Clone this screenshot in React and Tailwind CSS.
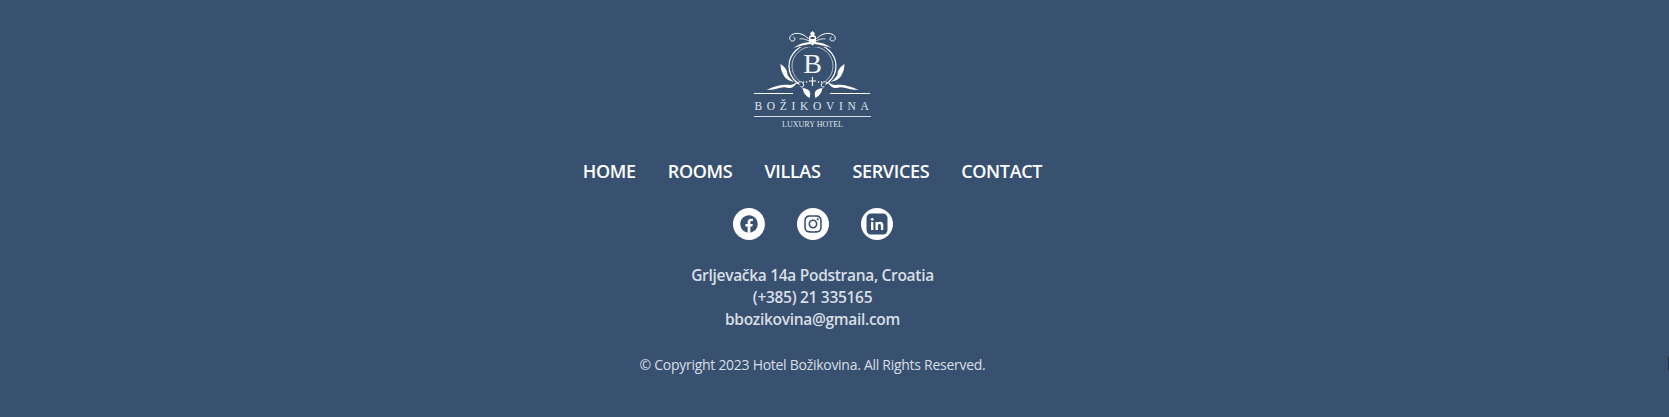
import { FaFacebook, FaInstagram } from "react-icons/fa";

// one half of the crest, the other half is the same thing mirrored
const CrestHalf = () => (
  <g>
    {/* crown scrolls */}
    <path d="M55 9C50 3 42 2 38 5c-3 2-2 6 1 6s3-3 1-4" stroke="#fff" strokeWidth="1" fill="none" />
    <path d="M56 11c-3-1-7-3-10-2" stroke="#fff" strokeWidth="0.8" fill="none" />
    <path d="M40 18c5-4 11-6 17-6l0 2c-6 1-12 2-17 4z" fill="#fff" />
    {/* side leaf */}
    <path d="M27 34c5 3 7 7 7 11 2 3 4 5 7 7-5-1-9-3-11-7-2-3-3-7-3-11z" fill="#fff" />
    {/* lower sprig */}
    <path d="M13 60c8-4 16-6 23-5 3 0 5-1 7-3-1 4-4 6-8 6-3-1-6-1-9 0-4 1-8 2-13 2z" fill="#fff" />
    {/* bottom scrolls */}
    <path d="M43 54c2-3 6-3 7 0s-2 4-3 2" stroke="#fff" strokeWidth="1" fill="none" />
    <path d="M49 58c2 0 5 1 7 3 1 2 1 5 0 7-3-2-6-4-7-10z" fill="#fff" />
    <circle cx="53" cy="52" r="0.8" fill="#fff" />
    <circle cx="50" cy="52" r="0.7" fill="#fff" />
  </g>
);

const Logo = () => (
  <svg width="120" height="102" viewBox="0 0 120 102" fill="none" className="block">
    <g transform="translate(0.500,0)">
      <ellipse cx="59" cy="36" rx="23.500" ry="22" stroke="#fff" strokeWidth="1.200" />
      <ellipse cx="59" cy="36" rx="20.500" ry="19.500" stroke="#fff" strokeWidth="0.600" />
      <rect x="44" y="4" width="30" height="13" fill="#385170" />
      <rect x="46" y="50" width="26" height="12" fill="#385170" />
      <CrestHalf />
      <g transform="translate(118,0) scale(-1,1)">
        <CrestHalf />
      </g>
      {/* crown and cross in the middle */}
      <path d="M59 1l2.500 2.500-1 1.500 2 1.500v6l-3.500 3-3.500-3v-6l2-1.500-1-1.500z" fill="#fff" />
      <rect x="57" y="7" width="4" height="2" fill="#385170" />
      <path d="M58.400 47h1.200v3.400h3v1.200h-3v4.400h-1.200v-4.400h-3v-1.200h3z" fill="#fff" />
    </g>
    <rect x="1" y="63" width="39" height="1" fill="#fff" />
    <rect x="77" y="63" width="40" height="1" fill="#fff" />
    <rect x="1" y="86" width="117" height="1" fill="#d7dde5" />
    <text x="59.500" y="43" textAnchor="middle" fill="#f1f3f6" fontFamily="'Liberation Serif', serif" fontSize="28">B</text>
    <text x="61" y="80" textAnchor="middle" fill="#dfe4ea" fontFamily="'Liberation Serif', serif" fontSize="11.500" letterSpacing="4.700">BOŽIKOVINA</text>
    <text x="59.500" y="97" textAnchor="middle" fill="#dfe4ea" fontFamily="'Liberation Serif', serif" fontSize="8">LUXURY HOTEL</text>
  </svg>
);

const LinkedinIcon = () => (
  <svg width="22" height="22" viewBox="0 0 22 22">
    <rect x="0.500" y="0.500" width="21" height="21" rx="4.500" fill="#385170" />
    <rect x="5" y="9" width="2.400" height="8" fill="#fff" />
    <circle cx="6.200" cy="6.300" r="1.400" fill="#fff" />
    <path d="M9.500 9h2.300v1.100c.5-.8 1.400-1.300 2.500-1.300 2 0 3 1.200 3 3.400V17h-2.400v-4.300c0-1.100-.4-1.800-1.400-1.800s-1.600.7-1.600 1.800V17H9.500z" fill="#fff" />
  </svg>
);

const navLinks = ["HOME", "ROOMS", "VILLAS", "SERVICES", "CONTACT"];

export default function App() {
  return (
    <footer className="relative h-[417px] bg-[#385170] pt-[30px] pr-[44px] flex flex-col items-center font-['Open_Sans',sans-serif]">
      <Logo />
      <nav className="flex gap-[32px] mt-[25px] text-white text-[18px] leading-[28px] font-semibold tracking-[-0.34px]">
        {navLinks.map((link) => (
          <a key={link} href="#">{link}</a>
        ))}
      </nav>
      <div className="flex gap-[32px] mt-[23px]">
        <a href="#" className="w-[32px] h-[32px] rounded-full bg-white flex items-center justify-center text-[#385170]">
          <FaFacebook size={18} />
        </a>
        <a href="#" className="w-[32px] h-[32px] rounded-full bg-white flex items-center justify-center text-[#385170]">
          <FaInstagram size={20} />
        </a>
        <a href="#" className="w-[32px] h-[32px] rounded-full bg-white flex items-center justify-center">
          <LinkedinIcon />
        </a>
      </div>
      <div className="mt-[24px] text-center text-[#d9dee5] text-[15.5px] leading-[22px] font-semibold tracking-[-0.3px]">
        <p>Grljevačka 14a Podstrana, Croatia</p>
        <p>(+385) 21 335165</p>
        <p>bbozikovina@gmail.com</p>
      </div>
      <p className="mt-[25px] text-[#d9dee5] text-[14px] leading-[20px] tracking-[-0.28px]">© Copyright 2023 Hotel Božikovina. All Rights Reserved.</p>
      <div className="absolute right-0 top-[357px] w-[1px] h-[13px] bg-[#22344a]" />
    </footer>
  );
}
